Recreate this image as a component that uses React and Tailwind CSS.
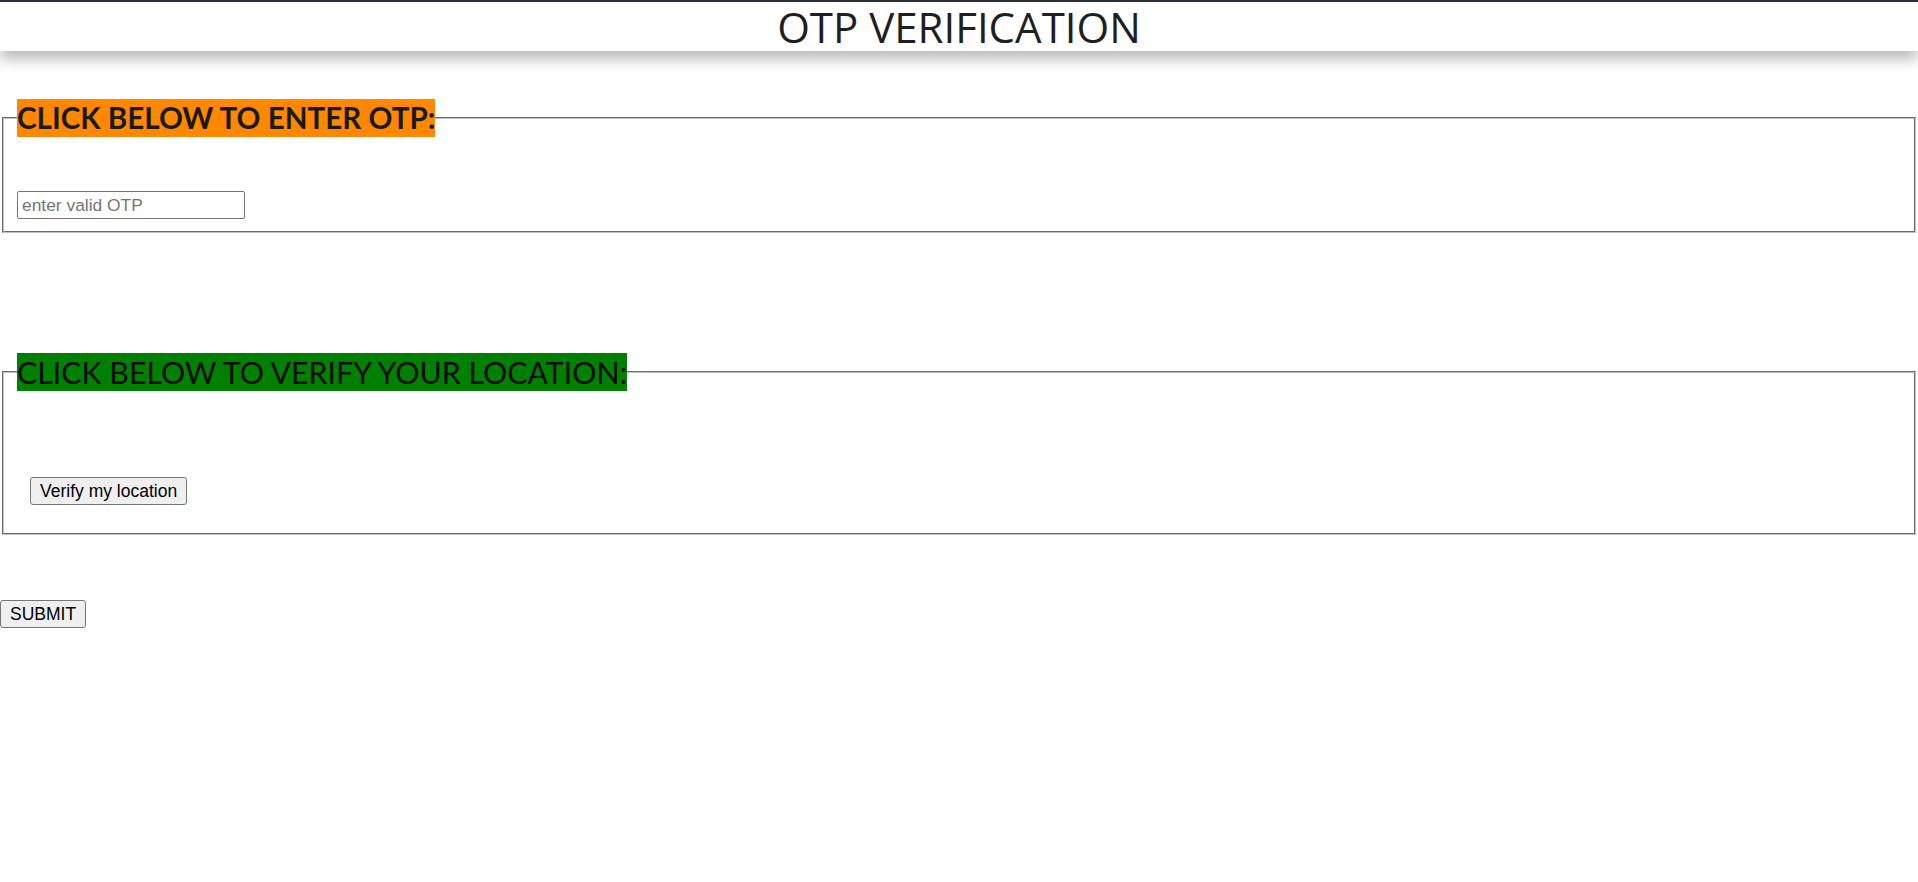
import { useState } from 'react';

const App = () => {
  const [otp, setOtp] = useState('');

  return (
    <div className="min-h-screen bg-white">
      {/* Header */}
      <div className="h-[51px] border-t-2 border-[#2d2f3a] bg-white shadow-[0_8px_14px_rgba(0,0,0,0.28)] flex items-center justify-center">
        <h1 className="font-['Open_Sans',sans-serif] text-[42px] leading-none text-[#1f1f1f] pt-[1px]">
          OTP VERIFICATION
        </h1>
      </div>

      {/* OTP */}
      <fieldset className="mx-[2px] mt-[48px] border-2 [border-style:groove] border-[#c0c0c0] pl-[13px] pr-3 pb-[12px]">
        <legend className="bg-[#ff8800] text-[#1a1a1a] font-['Lato',sans-serif] font-bold text-[29.6px] leading-[38px]">
          CLICK BELOW TO ENTER OTP:
        </legend>
        <input
          type="text"
          value={otp}
          onChange={(e) => setOtp(e.target.value)}
          placeholder="enter valid OTP"
          className="mt-[54px] block w-[228px] h-[28px] border border-[#767676] rounded-[2px] px-[4px] font-['Liberation_Sans',Arial,sans-serif] text-[17.4px] text-black placeholder:text-[#757575] outline-none"
        />
      </fieldset>

      {/* Location */}
      <fieldset className="mx-[2px] mt-[120px] border-2 [border-style:groove] border-[#c0c0c0] pl-[13px] pr-3 pb-[28px]">
        <legend className="bg-[#008000] text-[#0a0a0a] font-['Lato',sans-serif] font-normal text-[30.3px] leading-[38px]">
          CLICK BELOW TO VERIFY YOUR LOCATION:
        </legend>
        <button className="mt-[86px] ml-[13px] block h-[28px] px-[9px] whitespace-nowrap bg-[#efefef] border border-[#767676] rounded-[3px] font-['Liberation_Sans',Arial,sans-serif] text-[17.5px] text-black">
          Verify my location
        </button>
      </fieldset>

      <button className="mt-[65px] block h-[28px] px-[9px] whitespace-nowrap bg-[#efefef] border border-[#767676] rounded-[3px] font-['Liberation_Sans',Arial,sans-serif] text-[17.5px] text-black">
        SUBMIT
      </button>
    </div>
  );
};

export default App;
